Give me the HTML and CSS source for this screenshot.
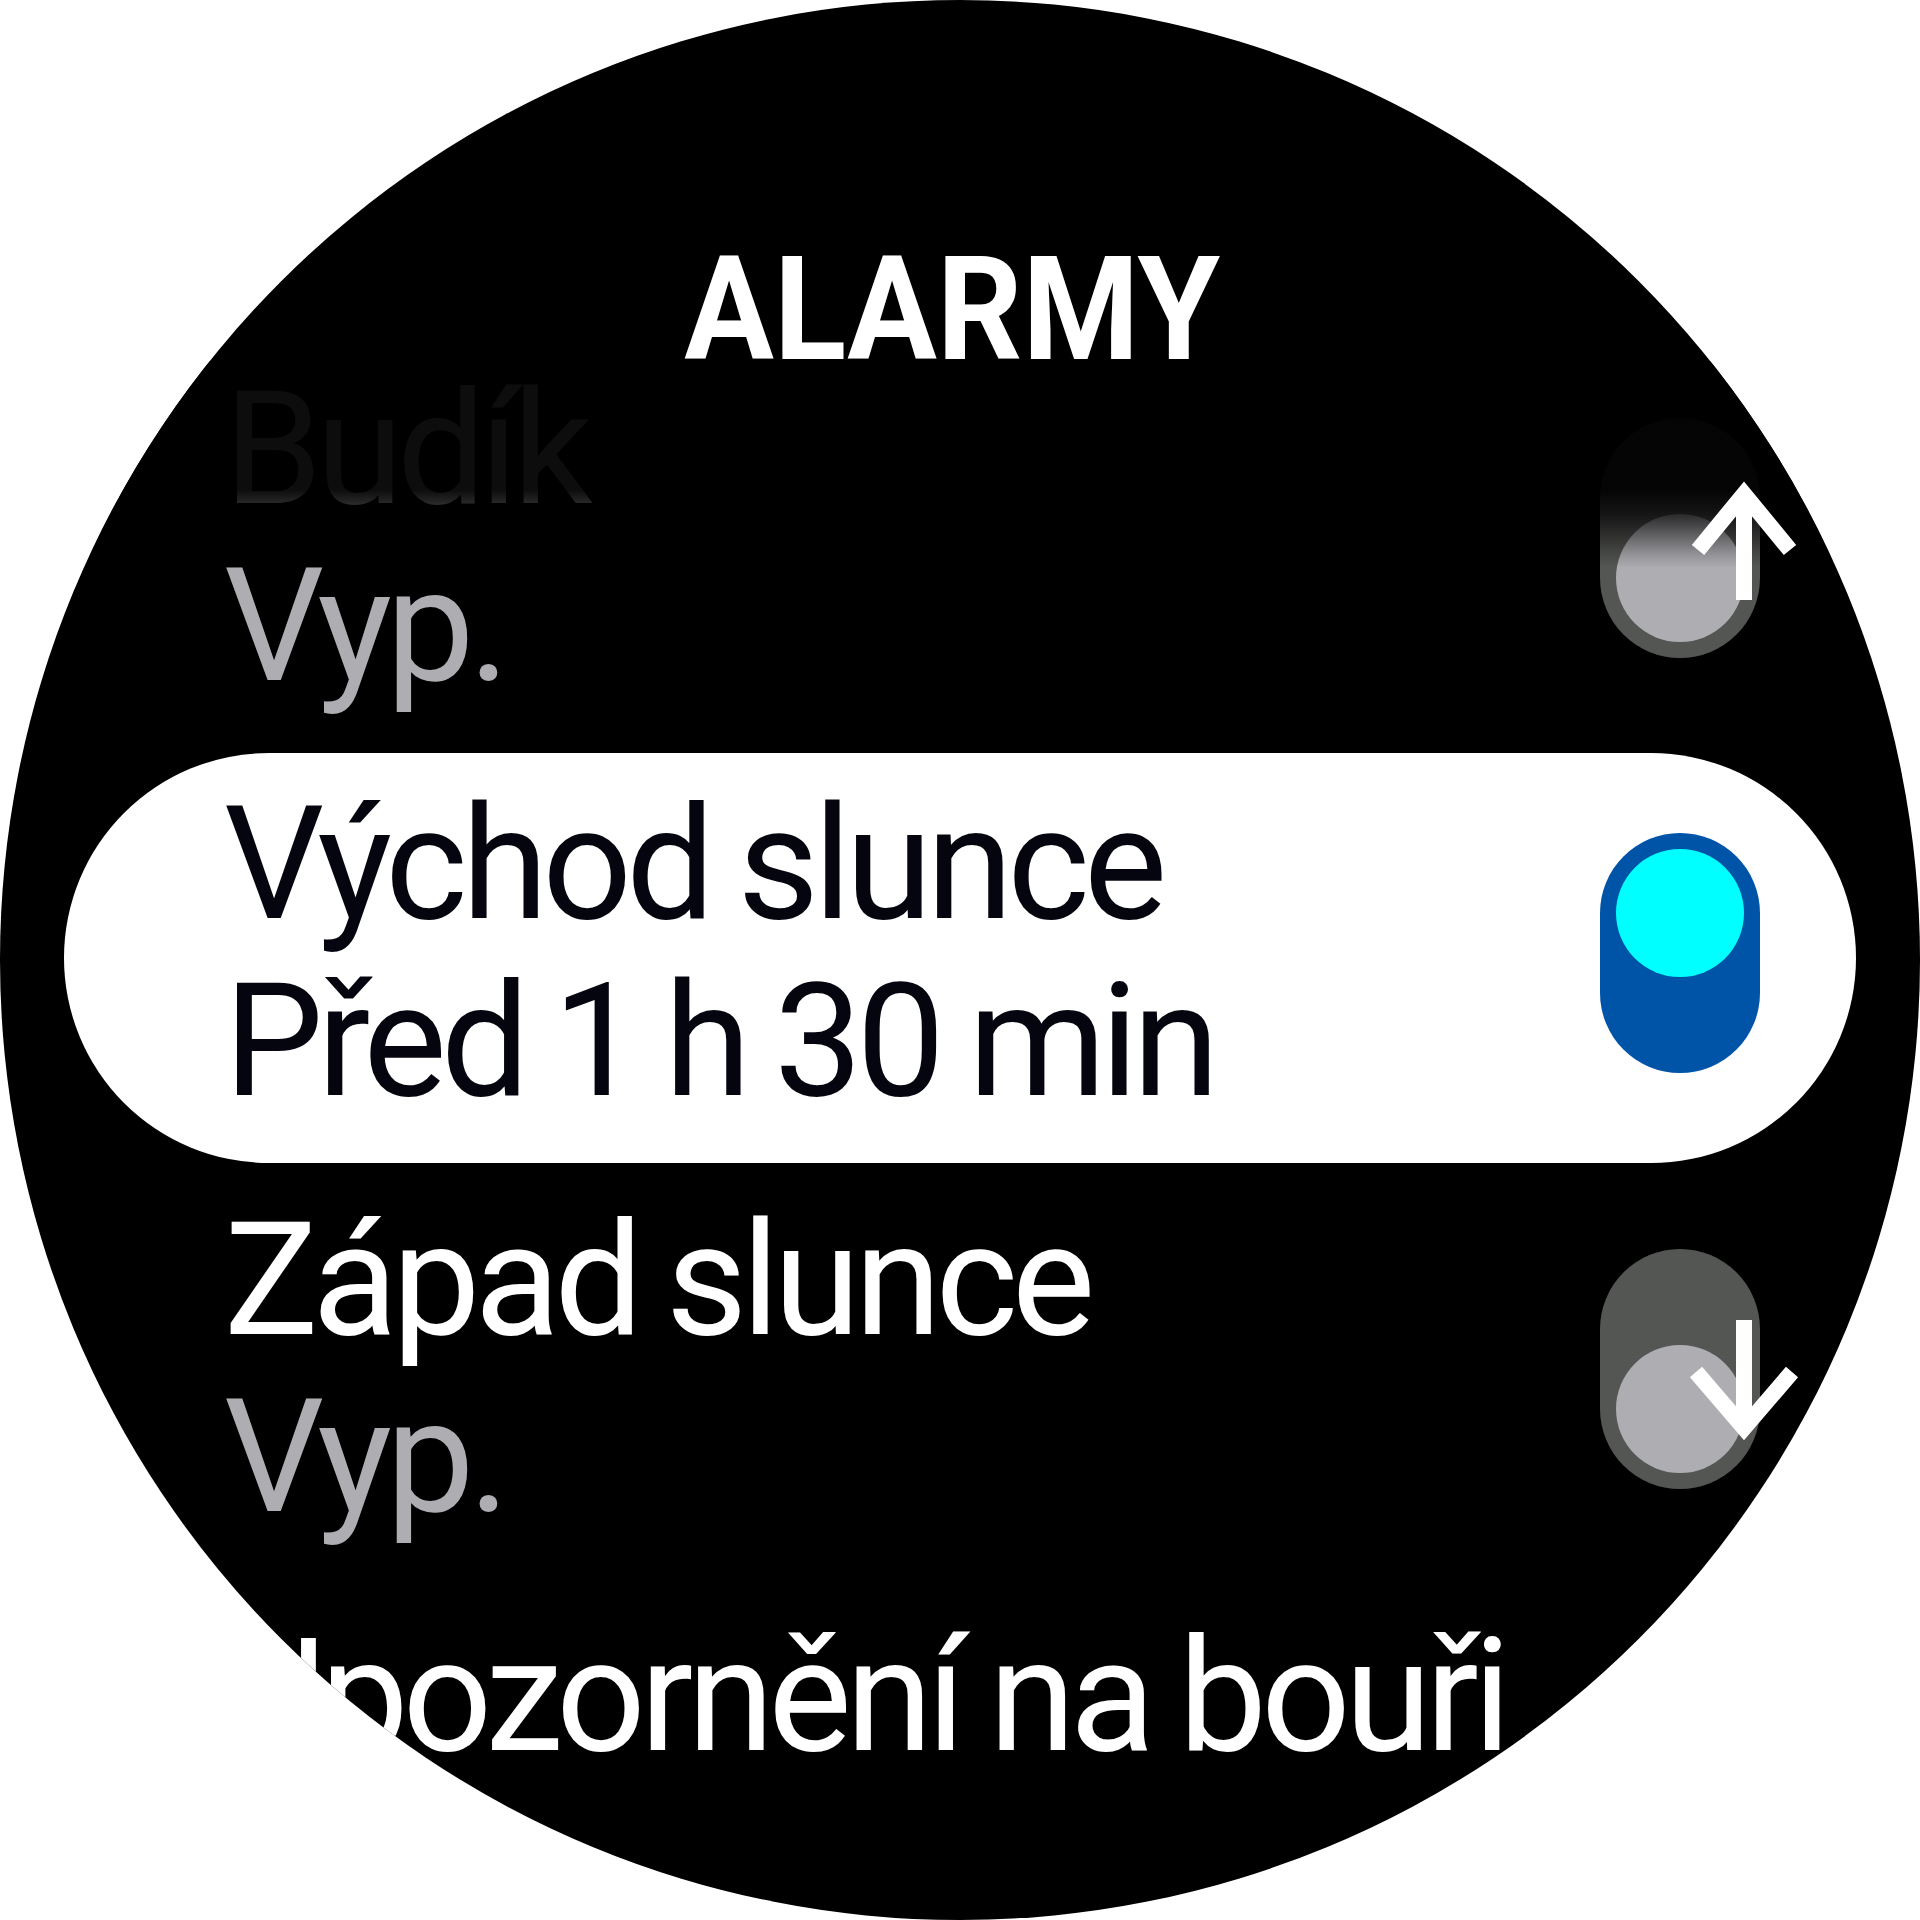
FILE: index.html
```html
<!DOCTYPE html>
<html lang="cs">
<head>
<meta charset="utf-8">
<title>Alarmy</title>
<link rel="stylesheet" href="styles.css">
</head>
<body>
<div class="watch">
  <h1 class="title"><span class="title-text">ALARMY</span></h1>
  <ul class="list">
    <li class="row row--first">
      <div class="text">
        <div class="name">Budík</div>
        <div class="value">Vyp.</div>
      </div>
      <span class="toggle"><span class="knob"></span></span>
    </li>
    <li class="row row--active">
      <div class="text">
        <div class="name">Východ slunce</div>
        <div class="value">Před 1 h 30 min</div>
      </div>
      <span class="toggle toggle--on"><span class="knob"></span></span>
    </li>
    <li class="row">
      <div class="text">
        <div class="name">Západ slunce</div>
        <div class="value">Vyp.</div>
      </div>
      <span class="toggle"><span class="knob"></span></span>
    </li>
    <li class="row row--last">
      <div class="text">
        <div class="name">Upozornění na bouři</div>
      </div>
    </li>
  </ul>
  <div class="fade"></div>
  <svg class="arrows" viewBox="0 0 1920 1920" xmlns="http://www.w3.org/2000/svg">
    <g fill="none" stroke="#ffffff" stroke-width="16" stroke-linejoin="miter" stroke-linecap="butt">
      <path d="M1744 600 V494"/>
      <path d="M1698 550 L1744 494 L1790 550"/>
      <path d="M1744 1320 V1428"/>
      <path d="M1696 1372 L1744 1428 L1792 1372"/>
    </g>
  </svg>
</div>
</body>
</html>
```
FILE: styles.css
```css
html, body {
  margin: 0;
  padding: 0;
  background: #ffffff;
}

.watch {
  position: relative;
  width: 1920px;
  height: 1920px;
  box-sizing: border-box;
  padding-top: 257px;
  background: #000000;
  border-radius: 50%;
  overflow: hidden;
  font-family: Roboto, "Liberation Sans", sans-serif;
}

.title {
  margin: 0;
  padding-right: 16px;
  font-size: 145px;
  font-weight: 700;
  line-height: 104px;
  text-align: center;
  color: #ffffff;
}

.title-text {
  display: inline-block;
  letter-spacing: 0;
  transform: scaleX(0.92);
}

.list {
  list-style: none;
  margin: 0 0 0 64px;
  padding: 0;
  width: 1792px;
  display: flex;
  flex-direction: column;
  gap: 6px;
}

.row {
  display: flex;
  align-items: center;
  box-sizing: border-box;
  height: 410px;
  padding: 23px 96px 33px 160px;
  color: #ffffff;
}

.row--first {
  height: 386px;
  padding-top: 0;
  padding-bottom: 32px;
}

.row--last {
  align-items: flex-start;
}

.row--active {
  background: #ffffff;
  border-radius: 205px;
  color: #05050f;
}

.text {
  flex: 1;
  font-size: 157.5px;
  font-weight: 400;
  line-height: 177px;
  letter-spacing: -6px;
  word-spacing: -4px;
  white-space: nowrap;
}

.value {
  color: #aeadb2;
}

.row--active .value {
  color: #05050f;
}

.toggle {
  flex: none;
  display: flex;
  flex-direction: column;
  justify-content: flex-end;
  box-sizing: border-box;
  width: 160px;
  height: 240px;
  padding: 16px;
  border-radius: 80px;
  background: #545653;
}

.knob {
  display: block;
  width: 128px;
  height: 128px;
  border-radius: 50%;
  background: #aeadb2;
}

.toggle--on {
  justify-content: flex-start;
  background: #0054a8;
}

.toggle--on .knob {
  background: #00ffff;
}

.fade {
  position: absolute;
  left: 0;
  top: 361px;
  width: 100%;
  height: 210px;
  background: linear-gradient(to bottom,
    rgba(0, 0, 0, 0.95) 0px,
    rgba(0, 0, 0, 0.95) 129px,
    rgba(0, 0, 0, 0.75) 154px,
    rgba(0, 0, 0, 0.45) 174px,
    rgba(0, 0, 0, 0.15) 194px,
    rgba(0, 0, 0, 0) 207px);
}

.arrows {
  position: absolute;
  left: 0;
  top: 0;
  width: 1920px;
  height: 1920px;
  pointer-events: none;
}
```
